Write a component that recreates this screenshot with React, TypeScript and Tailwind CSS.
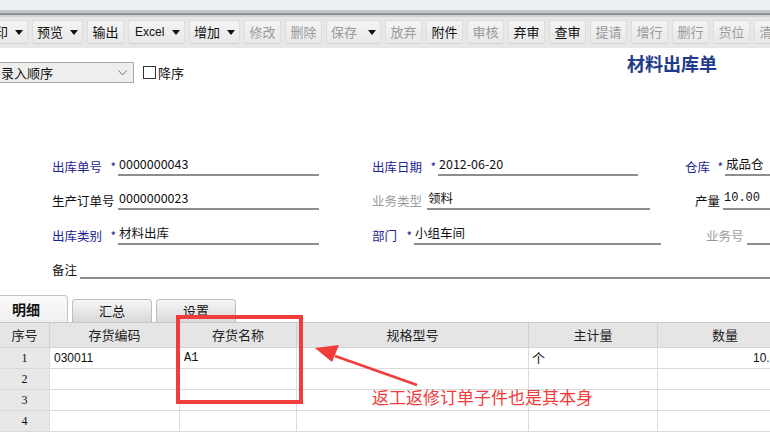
import type { ReactNode } from 'react'

const CJK = '"Noto Sans CJK SC", "Liberation Sans", sans-serif'

type Btn = { label: string; w: number; drop?: boolean; off?: boolean }

const buttons: Btn[] = [
  { label: '打印', w: 51, drop: true },
  { label: '预览', w: 51, drop: true },
  { label: '输出', w: 37 },
  { label: 'Excel', w: 57, drop: true },
  { label: '增加', w: 51, drop: true },
  { label: '修改', w: 37, off: true },
  { label: '删除', w: 37, off: true },
  { label: '保存', w: 55, drop: true, off: true },
  { label: '放弃', w: 37, off: true },
  { label: '附件', w: 37 },
  { label: '审核', w: 37, off: true },
  { label: '弃审', w: 37 },
  { label: '查审', w: 37 },
  { label: '提请', w: 37, off: true },
  { label: '增行', w: 37, off: true },
  { label: '删行', w: 37, off: true },
  { label: '货位', w: 37, off: true },
  { label: '清空', w: 37, off: true },
]

function Caret() {
  return (
    <svg width="8" height="5" viewBox="0 0 8 5" className="shrink-0">
      <polygon points="0,0 8,0 4,5" fill="#111" />
    </svg>
  )
}

function ToolButton({ b }: { b: Btn }) {
  return (
    <div
      style={{ width: b.w }}
      className={`flex h-[24px] shrink-0 items-center rounded-[3px] border border-[#dedede] border-b-[#d2d2d2] bg-gradient-to-b from-[#f4f4f4] to-[#e8e8e8] text-[13px] ${
        b.drop ? 'justify-between pl-[4px] pr-[4px]' : 'justify-center'
      } ${b.off ? 'text-[#9a9a9a]' : 'text-[#111]'}`}
    >
      <span className={b.label === 'Excel' ? 'font-["Liberation_Sans"] text-[12px] pl-[2px]' : ''}>{b.label}</span>
      {b.drop && <Caret />}
    </div>
  )
}

function Field({
  label,
  req,
  value,
  labelW,
  fieldW,
  tone = 'black',
  ml = 0,
  mono,
}: {
  label: string
  req?: boolean
  value?: ReactNode
  labelW: number
  fieldW?: number
  tone?: 'blue' | 'black' | 'gray'
  ml?: number
  mono?: boolean
}) {
  const color = tone === 'blue' ? 'text-[#1d2390]' : tone === 'gray' ? 'text-[#9a9a9a]' : 'text-[#111]'
  return (
    <div className={`flex items-end ${fieldW ? 'shrink-0' : 'min-w-0 flex-1'}`} style={{ marginLeft: ml }}>
      <div style={{ width: labelW }} className={`flex shrink-0 items-end pb-[1px] text-[12.5px] leading-[16px] ${color}`}>
        <span>{label}</span>
        {req && <span className="ml-auto mr-[2px] text-[12px] text-[#1d2390]">*</span>}
      </div>
      <div
        style={fieldW ? { width: fieldW } : undefined}
        className={`h-[20px] border-b-2 border-[#8e8e8e] pl-[1px] text-[#111] ${fieldW ? '' : 'flex-1'} ${
          mono ? 'font-["Liberation_Mono"] text-[12px] leading-[16px]' : 'text-[12.5px] leading-[16px]'
        }`}
      >
        {value}
      </div>
    </div>
  )
}

const cols = [
  { t: '序号', w: 50 },
  { t: '存货编码', w: 130 },
  { t: '存货名称', w: 117 },
  { t: '规格型号', w: 232 },
  { t: '主计量', w: 129 },
  { t: '数量', w: 134 },
]

const rows = [
  ['1', '030011', 'A1', '', '个', '10.00'],
  ['2', '', '', '', '', ''],
  ['3', '', '', '', '', ''],
  ['4', '', '', '', '', ''],
]

export default function App() {
  return (
    <div className="relative h-[443px] w-[770px] overflow-hidden bg-white" style={{ fontFamily: CJK }}>
      {/* window chrome strip */}
      <div className="h-[10px] bg-[#eceff3]" />
      <div className="h-[3px] bg-[#c4c6c8]" />
      <div className="h-[2px] bg-[#8f9194]" />
      <div className="h-[2px] bg-[#d2d3d4]" />

      {/* toolbar */}
      <div className="flex h-[31px] items-center gap-[4px] bg-[#e7e7e7] pb-[1px]">
        <div className="ml-[-27px]" />
        {buttons.map((b) => (
          <ToolButton key={b.label} b={b} />
        ))}
      </div>

      {/* sort + title */}
      <div className="flex h-[42px] items-start">
        <div className="ml-[-6px] mt-[14px] flex h-[21px] w-[140px] items-center justify-between border border-[#a9a9a9] bg-[#eeeeee] pl-[6px] pr-[6px] text-[13px] text-[#111]">
          <span>录入顺序</span>
          <svg width="9" height="6" viewBox="0 0 9 6">
            <polyline points="0.5,0.5 4.5,5 8.5,0.5" fill="none" stroke="#777" strokeWidth="1" />
          </svg>
        </div>
        <div className="ml-[9px] mt-[15px] flex items-center text-[13px] text-[#111]">
          <span className="h-[13px] w-[13px] border border-[#333] bg-white" />
          <span className="ml-[2px]">降序</span>
        </div>
        <div className="ml-auto mr-[53px] mt-[5px] text-[18px] font-bold leading-[20px] text-[#1f3b8a]">材料出库单</div>
      </div>

      {/* form */}
      <div className="mt-[51px] flex flex-col">
        <div className="flex h-[35px] items-end pl-[52px]">
          <Field label="出库单号" req tone="blue" labelW={66} fieldW={201} value="0000000043" />
          <Field label="出库日期" req tone="blue" labelW={66} fieldW={200} ml={53} value="2012-06-20" />
          <Field label="仓库" req tone="blue" labelW={40} ml={47} value="成品仓" />
        </div>
        <div className="flex h-[34px] items-end pl-[52px]">
          <Field label="生产订单号" labelW={66} fieldW={201} value="0000000023" />
          <Field label="业务类型" tone="gray" labelW={55} fieldW={223} ml={53} value="领料" />
          <Field label="产量" labelW={28} ml={45} value="10.00" mono />
        </div>
        <div className="flex h-[35px] items-end pl-[52px]">
          <Field label="出库类别" req tone="blue" labelW={66} fieldW={201} value="材料出库" />
          <Field label="部门" req tone="blue" labelW={42} fieldW={247} ml={53} value="小组车间" />
          <Field label="业务号" tone="gray" labelW={41} ml={45} />
        </div>
        <div className="flex h-[34px] items-end pl-[52px]">
          <Field label="备注" labelW={28} />
        </div>
      </div>

      {/* tabs */}
      <div className="mt-[17px] flex h-[26px] items-end gap-[4px]">
        <div className="flex h-[27px] w-[68px] items-center rounded-tr-[4px] border border-b-0 border-l-0 border-[#c4c4c4] bg-gradient-to-b from-[#fafafa] to-[#f0f0f0] pl-[12px] text-[14px] font-bold text-[#111]">
          明细
        </div>
        <div className="flex h-[23px] w-[80px] items-center justify-center rounded-t-[4px] border border-b-0 border-[#bdbdbd] bg-gradient-to-b from-[#f6f6f6] to-[#d9d9d9] text-[13px] text-[#111]">
          汇总
        </div>
        <div className="flex h-[23px] w-[80px] items-center justify-center rounded-t-[4px] border border-b-0 border-[#bdbdbd] bg-gradient-to-b from-[#f6f6f6] to-[#d9d9d9] text-[13px] text-[#111]">
          设置
        </div>
      </div>

      {/* grid */}
      <div className="w-[792px] border-t border-[#c8c8c8]">
        <div className="flex h-[25px] border-b border-[#d4d4d4] bg-[#e5e5e5]">
          {cols.map((c, i) => (
            <div
              key={c.t}
              style={{ width: c.w }}
              className={`flex shrink-0 items-center justify-center text-[13px] text-[#222] ${
                i < cols.length - 1 ? 'border-r border-[#d0d0d0]' : ''
              }`}
            >
              {c.t}
            </div>
          ))}
        </div>
        {rows.map((r) => (
          <div key={r[0]} className="flex h-[21px] border-b border-[#dadada]">
            {r.map((v, i) => (
              <div
                key={i}
                style={{ width: cols[i].w }}
                className={`flex shrink-0 items-center text-[12px] text-[#111] ${
                  i < r.length - 1 ? 'border-r border-[#dcdcdc]' : ''
                } ${i === 0 ? 'justify-center bg-[#e8e8e8] font-["Liberation_Serif"]' : ''} ${
                  i === 1 ? 'pl-[4px] font-["Liberation_Sans"]' : ''
                } ${i === 2 ? 'pl-[4px] font-["Liberation_Mono"]' : ''} ${i === 4 ? 'pl-[3px] text-[13px]' : ''} ${
                  i === 5 ? 'justify-end pr-[9px] font-["Liberation_Sans"]' : ''
                }`}
              >
                {v}
              </div>
            ))}
          </div>
        ))}
      </div>

      {/* annotation overlay */}
      <div className="absolute left-[176px] top-[315px] h-[89px] w-[127px] border-[4px] border-[#f23b3b]" />
      <svg className="absolute left-0 top-0" width="770" height="443" viewBox="0 0 770 443">
        <line x1="417" y1="385" x2="335" y2="356" stroke="#f23b3b" strokeWidth="2.5" />
        <polygon points="315,348 339,345 332,362" fill="#f23b3b" />
      </svg>
      <div className="absolute left-[372px] top-[386px] text-[17px] leading-[22px] text-[#f23b3b]">返工返修订单子件也是其本身</div>
    </div>
  )
}
